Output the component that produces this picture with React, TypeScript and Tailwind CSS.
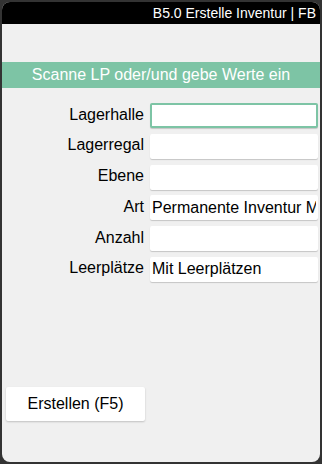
import { useState } from 'react';

const fields = [
  { label: 'Lagerhalle', value: '', focused: true },
  { label: 'Lagerregal', value: '' },
  { label: 'Ebene', value: '' },
  { label: 'Art', value: 'Permanente Inventur Mit Leerplätzen' },
  { label: 'Anzahl', value: '' },
  { label: 'Leerplätze', value: 'Mit Leerplätzen' },
];

export default function App() {
  const [values, setValues] = useState(fields.map((f) => f.value));

  return (
    <div
      className="w-[322px] h-[464px] bg-[#333333] p-[2px]"
      style={{ fontFamily: '"Liberation Sans", Arial, sans-serif' }}
    >
      <div className="h-full rounded-[8px] overflow-hidden bg-[#f0f0f0] flex flex-col">
        <div className="h-[22px] bg-black text-white text-[14px] leading-[22px] text-right pr-[4px] whitespace-nowrap overflow-hidden">
          B5.0 Erstelle Inventur | FB
        </div>

        <div className="mt-[38px] h-[26px] bg-[#7dc4a5] text-white text-[16px] leading-[26px] text-center">
          Scanne LP oder/und gebe Werte ein
        </div>

        <div className="mt-[15px] flex flex-col gap-[5.8px]">
          {fields.map((f, i) => (
            <div key={f.label} className="flex items-center">
              <label className="w-[142px] text-right text-[16px] text-black leading-[20px] -mt-[2px]">
                {f.label}
              </label>
              <input
                value={values[i]}
                onChange={(e) => {
                  const next = [...values];
                  next[i] = e.target.value;
                  setValues(next);
                }}
                className={`ml-[6px] w-[168px] h-[25px] bg-white rounded-[2px] text-[16px] text-black px-[2px] outline-none shadow-[0_1px_1px_rgba(0,0,0,0.18)] ${
                  f.focused ? 'border-2 border-[#7dc4a5]' : 'border-0'
                }`}
              />
            </div>
          ))}
        </div>

        <div className="mt-auto mb-[41px] pl-[4px]">
          <button className="w-[139px] h-[34px] bg-white text-black text-[16px] rounded-[2px] shadow-[0_1px_2px_rgba(0,0,0,0.2)]">
            Erstellen (F5)
          </button>
        </div>
      </div>
    </div>
  );
}
